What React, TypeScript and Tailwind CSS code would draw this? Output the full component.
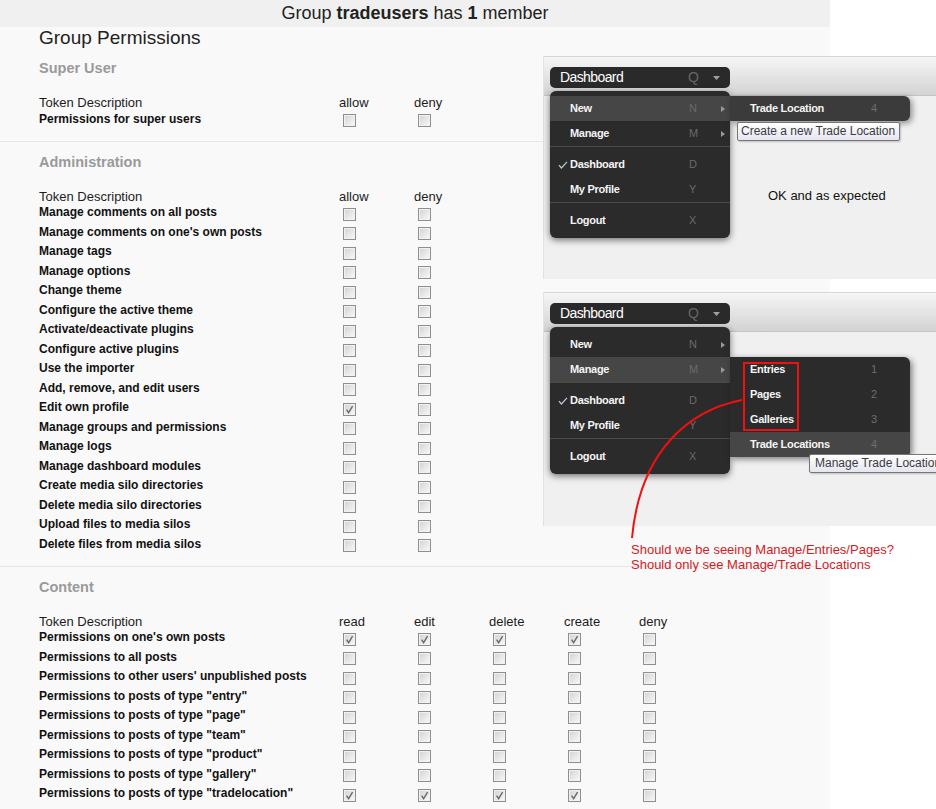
import type { ReactNode } from "react";

interface PermRow {
  label: string;
  /** indexes of the columns that are ticked */
  checked?: number[];
}

const SUPER_ROWS: PermRow[] = [{ label: "Permissions for super users" }];

const ADMIN_ROWS: PermRow[] = [
  { label: "Manage comments on all posts" },
  { label: "Manage comments on one's own posts" },
  { label: "Manage tags" },
  { label: "Manage options" },
  { label: "Change theme" },
  { label: "Configure the active theme" },
  { label: "Activate/deactivate plugins" },
  { label: "Configure active plugins" },
  { label: "Use the importer" },
  { label: "Add, remove, and edit users" },
  { label: "Edit own profile", checked: [0] },
  { label: "Manage groups and permissions" },
  { label: "Manage logs" },
  { label: "Manage dashboard modules" },
  { label: "Create media silo directories" },
  { label: "Delete media silo directories" },
  { label: "Upload files to media silos" },
  { label: "Delete files from media silos" },
];

const CONTENT_ROWS: PermRow[] = [
  { label: "Permissions on one's own posts", checked: [0, 1, 2, 3] },
  { label: "Permissions to all posts" },
  { label: "Permissions to other users' unpublished posts" },
  { label: 'Permissions to posts of type "entry"' },
  { label: 'Permissions to posts of type "page"' },
  { label: 'Permissions to posts of type "team"' },
  { label: 'Permissions to posts of type "product"' },
  { label: 'Permissions to posts of type "gallery"' },
  { label: 'Permissions to posts of type "tradelocation"', checked: [0, 1, 2, 3] },
];

function Checkbox({ checked = false }: { checked?: boolean }) {
  return (
    <span className="mt-[4px] ml-[4px] flex h-[13px] w-[13px] items-center justify-center border border-[#8f8f8f] bg-linear-to-br from-[#d2d2d2] to-[#fafafa] shadow-[inset_0_0_0_1px_#f1f1f1]">
      {checked && (
        <svg width="9" height="9" viewBox="0 0 9 9" fill="none">
          <path d="M1.6 4.6 L3.6 7.6 L7.6 1.2" stroke="#6a6a6a" strokeWidth="1.4" />
        </svg>
      )}
    </span>
  );
}

function PermissionSection({
  title,
  columns,
  rows,
  divided = false,
}: {
  title: string;
  columns: string[];
  rows: PermRow[];
  divided?: boolean;
}) {
  return (
    <section
      className={
        divided ? "border-t border-[#e7e7e7] pt-[10px] pb-[12px]" : "pt-[10px] pb-[12px]"
      }
    >
      <h2 className="pl-[39px] text-[14.5px] leading-[20px] font-bold text-[#9a9a9a]">
        {title}
      </h2>
      <div className="mt-[18px] flex h-[13px] text-[13px] leading-[13px] text-[#1c1c1c]">
        <span className="w-[339px] pl-[39px]">Token Description</span>
        {columns.map((c) => (
          <span key={c} className="w-[75px]">
            {c}
          </span>
        ))}
      </div>
      {rows.map((r) => (
        <div key={r.label} className="flex h-[19.5px] items-center">
          <span className="w-[339px] pl-[39px] text-[12px] font-bold whitespace-nowrap text-[#111]">
            {r.label}
          </span>
          {columns.map((c, i) => (
            <span key={c} className="flex w-[75px]">
              <Checkbox checked={r.checked?.includes(i)} />
            </span>
          ))}
        </div>
      ))}
    </section>
  );
}

/* ---- pasted screenshots of the dashboard menu ---- */

function Arrow() {
  return (
    <svg width="4" height="6" viewBox="0 0 4 6">
      <path d="M0 0 L4 3 L0 6 Z" fill="#9a9a9a" />
    </svg>
  );
}

function TickGlyph() {
  return (
    <svg width="10" height="8" viewBox="0 0 10 8" fill="none">
      <path d="M1 4.2 L3.4 7 L9 0.8" stroke="#c8c8c8" strokeWidth="1.2" />
    </svg>
  );
}

function MenuItem({
  label,
  shortcut,
  active = false,
  ticked = false,
  submenu = false,
}: {
  label: string;
  shortcut: string;
  active?: boolean;
  ticked?: boolean;
  submenu?: boolean;
}) {
  return (
    <div className={active ? "flex h-[25px] items-center bg-[#464646]" : "flex h-[25px] items-center"}>
      <span className="flex w-[20px] pl-[8px]">{ticked && <TickGlyph />}</span>
      <span className="w-[119px] text-[11px] font-bold tracking-[-0.3px] text-[#f4f4f4]">
        {label}
      </span>
      <span className="w-[32px] text-[11px] text-[#6a6a6a]">{shortcut}</span>
      {submenu && <Arrow />}
    </div>
  );
}

function SubItem({ label, n, active = false }: { label: string; n: string; active?: boolean }) {
  return (
    <div className={active ? "flex h-[25px] items-center bg-[#464646]" : "flex h-[25px] items-center"}>
      <span className="w-[141px] pl-[20px] text-[11px] font-bold tracking-[-0.3px] text-[#f4f4f4]">
        {label}
      </span>
      <span className="text-[11px] text-[#6e6e6e]">{n}</span>
    </div>
  );
}

function DashboardButton() {
  return (
    <div className="absolute top-[11px] left-[6px] flex h-[21px] w-[180px] items-center rounded-[5px] bg-[#2a2a2a] pl-[10px] text-[14px]">
      <span className="w-[128px] tracking-[-0.6px] text-white">Dashboard</span>
      <span className="w-[25px] text-[#666]">Q</span>
      <svg width="7" height="4" viewBox="0 0 7 4">
        <path d="M0 0 L7 0 L3.5 4 Z" fill="#a0a0a0" />
      </svg>
    </div>
  );
}

function DashMenu({ active }: { active: "New" | "Manage" }) {
  return (
    <div className="absolute top-[35px] left-[6px] w-[180px] rounded-[6px] bg-[#2b2b2b] py-[5px] shadow-[0_2px_7px_rgba(0,0,0,0.55)]">
      <MenuItem label="New" shortcut="N" submenu active={active === "New"} />
      <MenuItem label="Manage" shortcut="M" submenu active={active === "Manage"} />
      <div className="border-t border-[#4b4b4b] pt-[5px]">
        <MenuItem label="Dashboard" shortcut="D" ticked />
        <MenuItem label="My Profile" shortcut="Y" />
      </div>
      <div className="border-t border-[#4b4b4b] pt-[5px]">
        <MenuItem label="Logout" shortcut="X" />
      </div>
    </div>
  );
}

function Tooltip({ className, children }: { className: string; children: ReactNode }) {
  return (
    <div
      className={`absolute h-[19px] rounded-[2px] border border-[#767676] bg-linear-to-b from-white to-[#e4e5f0] text-[12px] leading-[17px] whitespace-nowrap text-[#3c3c3c] shadow-[1px_1px_2px_rgba(0,0,0,0.2)] ${className}`}
    >
      {children}
    </div>
  );
}

function ShotFrame({ className, children }: { className: string; children: ReactNode }) {
  return (
    <div className={`absolute left-[543px] w-[393px] border-l border-[#e2e2e2] bg-[#f0f0f0] ${className}`}>
      <div className="h-[40px] border-t border-[#d6d6d6] border-b border-b-[#c4c4c4] bg-linear-to-b from-[#f6f6f6] to-[#d3d3d3]" />
      {children}
    </div>
  );
}

export default function App() {
  return (
    <div className="relative h-[809px] w-[936px] overflow-hidden bg-white font-['Liberation_Sans',Arial,sans-serif] text-[#111]">
      <div className="h-full w-[830px] bg-[#f9f9f9]">
        <div className="h-[27px] bg-[#f0f0f0] text-center text-[18px] leading-[26px] text-[#222]">
          Group <b>tradeusers</b> has <b>1</b> member
        </div>
        <h1 className="pl-[39px] text-[19px] leading-[21px] text-[#222]">Group Permissions</h1>

        <PermissionSection title="Super User" columns={["allow", "deny"]} rows={SUPER_ROWS} />
        <PermissionSection
          title="Administration"
          columns={["allow", "deny"]}
          rows={ADMIN_ROWS}
          divided
        />
        <PermissionSection
          title="Content"
          columns={["read", "edit", "delete", "create", "deny"]}
          rows={CONTENT_ROWS}
          divided
        />
      </div>

      {/* first capture: New submenu, as expected */}
      <ShotFrame className="top-[56px] h-[223px]">
        <DashboardButton />
        <DashMenu active="New" />
        <div className="absolute top-[40px] left-[186px] w-[180px] overflow-hidden rounded-r-[6px] bg-[#3b3b3b] shadow-[2px_2px_6px_rgba(0,0,0,0.45)]">
          <SubItem label="Trade Location" n="4" />
        </div>
        <Tooltip className="top-[66px] left-[193px] w-[163px] pl-[3px]">
          Create a new Trade Location
        </Tooltip>
        <p className="absolute top-[131px] left-[224px] text-[13px] leading-[18px] text-[#111]">
          OK and as expected
        </p>
      </ShotFrame>

      {/* second capture: Manage submenu showing too much */}
      <ShotFrame className="top-[292px] h-[234px]">
        <DashboardButton />
        <DashMenu active="Manage" />
        <div className="absolute top-[65px] left-[186px] w-[180px] overflow-hidden rounded-r-[6px] bg-[#2b2b2b] shadow-[2px_2px_6px_rgba(0,0,0,0.5)]">
          <SubItem label="Entries" n="1" />
          <SubItem label="Pages" n="2" />
          <SubItem label="Galleries" n="3" />
          <SubItem label="Trade Locations" n="4" active />
        </div>
        <div className="absolute top-[70px] left-[199px] h-[69px] w-[56px] border-2 border-[#ee1111]" />
        <Tooltip className="top-[162px] left-[265px] w-[140px] pl-[5px]">
          Manage Trade Locations
        </Tooltip>
      </ShotFrame>

      <svg className="pointer-events-none absolute top-0 left-0" width="936" height="809" fill="none">
        <path d="M742 400 C 690 410, 640 450, 632 538" stroke="#ee1111" strokeWidth="2" />
      </svg>

      <p className="absolute top-[543px] left-[631px] text-[13px] leading-[14.5px] text-[#cf1c26]">
        Should we be seeing Manage/Entries/Pages?
        <br />
        Should only see Manage/Trade Locations
      </p>
    </div>
  );
}
